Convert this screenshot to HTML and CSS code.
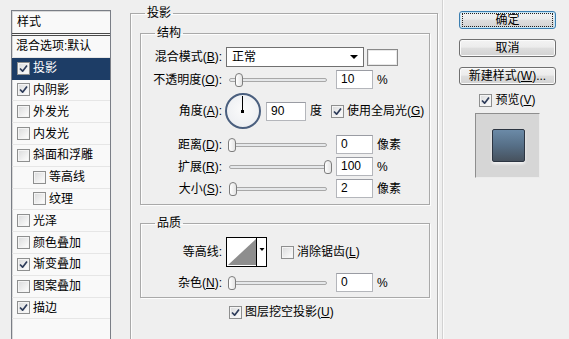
FILE: index.html
```html
<!DOCTYPE html>
<html lang="zh-CN">
<head>
<meta charset="utf-8">
<title>图层样式</title>
<link rel="stylesheet" href="styles.css">
</head>
<body>
<div class="dialog">
  <aside class="side">
    <div class="list">
      <div class="list-head">样式</div>
      <div class="item plain">混合选项:默认</div>
      <div class="item sel"><span class="cb on"><svg viewBox="0 0 11 11"><path d="M2 5.5 4.6 8.2 9 2.4"/></svg></span>投影</div>
      <div class="item"><span class="cb on"><svg viewBox="0 0 11 11"><path d="M2 5.5 4.6 8.2 9 2.4"/></svg></span>内阴影</div>
      <div class="item"><span class="cb"></span>外发光</div>
      <div class="item"><span class="cb"></span>内发光</div>
      <div class="item"><span class="cb"></span>斜面和浮雕</div>
      <div class="item sub"><span class="cb"></span>等高线</div>
      <div class="item sub"><span class="cb"></span>纹理</div>
      <div class="item"><span class="cb"></span>光泽</div>
      <div class="item"><span class="cb"></span>颜色叠加</div>
      <div class="item"><span class="cb on"><svg viewBox="0 0 11 11"><path d="M2 5.5 4.6 8.2 9 2.4"/></svg></span>渐变叠加</div>
      <div class="item"><span class="cb"></span>图案叠加</div>
      <div class="item"><span class="cb on"><svg viewBox="0 0 11 11"><path d="M2 5.5 4.6 8.2 9 2.4"/></svg></span>描边</div>
    </div>
  </aside>

  <main class="main">
    <fieldset class="group outer">
      <legend>投影</legend>

      <fieldset class="group inner">
        <legend>结构</legend>
        <div class="rows struct">
          <div class="row r-select">
            <span class="lbl">混合模式(<u>B</u>):</span>
            <div class="select"><span>正常</span><span class="arrow"></span></div>
            <span class="swatch"></span>
          </div>
          <div class="row r-field">
            <span class="lbl">不透明度(<u>O</u>):</span>
            <div class="slider"><span class="track"></span><span class="thumb" style="left:9px"></span></div>
            <span class="input">10</span>
            <span class="unit">%</span>
          </div>
          <div class="row r-dial">
            <span class="lbl">角度(<u>A</u>):</span>
            <div class="dial"><span class="hand"></span><span class="dot"></span></div>
            <span class="input angle">90</span>
            <span class="deg">度</span>
            <span class="cb on"><svg viewBox="0 0 11 11"><path d="M2 5.5 4.6 8.2 9 2.4"/></svg></span>
            <span class="cb-text">使用全局光(<u>G</u>)</span>
          </div>
          <div class="row r-field r-dist">
            <span class="lbl">距离(<u>D</u>):</span>
            <div class="slider"><span class="track"></span><span class="thumb" style="left:2px"></span></div>
            <span class="input">0</span>
            <span class="unit">像素</span>
          </div>
          <div class="row r-field">
            <span class="lbl">扩展(<u>R</u>):</span>
            <div class="slider"><span class="track"></span><span class="thumb" style="left:98px"></span></div>
            <span class="input">100</span>
            <span class="unit">%</span>
          </div>
          <div class="row r-field">
            <span class="lbl">大小(<u>S</u>):</span>
            <div class="slider"><span class="track"></span><span class="thumb" style="left:3px"></span></div>
            <span class="input">2</span>
            <span class="unit">像素</span>
          </div>
        </div>
      </fieldset>

      <fieldset class="group inner quality">
        <legend>品质</legend>
        <div class="rows">
          <div class="row r-contour">
            <span class="lbl">等高线:</span>
            <div class="contour">
              <svg viewBox="0 0 41 30" width="41" height="30">
                <rect x="0.5" y="0.5" width="40" height="29" fill="#fff" stroke="#000"/>
                <polygon points="2,28 30,2 30,28" fill="#8e8e8e"/>
                <line x1="30.5" y1="0.5" x2="30.5" y2="29.5" stroke="#000"/>
                <polygon points="33.5,11 38.5,11 36,14" fill="#000"/>
              </svg>
            </div>
            <span class="cb aa"></span>
            <span class="cb-text">消除锯齿(<u>L</u>)</span>
          </div>
          <div class="row r-field r-noise">
            <span class="lbl">杂色(<u>N</u>):</span>
            <div class="slider"><span class="track"></span><span class="thumb" style="left:2px"></span></div>
            <span class="input">0</span>
            <span class="unit">%</span>
          </div>
        </div>
      </fieldset>

      <div class="knockout">
        <span class="cb on"><svg viewBox="0 0 11 11"><path d="M2 5.5 4.6 8.2 9 2.4"/></svg></span>
        <span class="cb-text">图层挖空投影(<u>U</u>)</span>
      </div>
    </fieldset>
  </main>

  <div class="sep"></div>

  <div class="actions">
    <button class="btn default"><span>确定</span></button>
    <button class="btn">取消</button>
    <button class="btn">新建样式(<u>W</u>)...</button>
    <div class="preview-row">
      <span class="cb on"><svg viewBox="0 0 11 11"><path d="M2 5.5 4.6 8.2 9 2.4"/></svg></span>
      <span class="cb-text">预览(<u>V</u>)</span>
    </div>
    <div class="preview"><span class="swatch-prev"></span></div>
  </div>
</div>
</body>
</html>
```

FILE: styles.css
```css
* { box-sizing: border-box; }

html, body {
  margin: 0;
  padding: 0;
  width: 569px;
  height: 339px;
  overflow: hidden;
  background: #efefef;
}

body {
  font-family: "Liberation Sans", "Noto Sans CJK SC", sans-serif;
  font-size: 12px;
  line-height: 16px;
  color: #000;
}

u {
  text-decoration: underline;
  text-underline-offset: 1px;
}

.dialog {
  display: flex;
  align-items: flex-start;
  width: 569px;
  height: 339px;
  overflow: hidden;
}

/* ---------- left style list ---------- */
.side {
  width: 111px;
  flex: none;
  padding: 10px 0 0 11px;
}

.list {
  width: 100px;
  height: 329px;
  background: #f9f9f9;
  border: 1px solid #7a7e86;
  border-bottom: none;
  box-shadow: inset 1px 1px 0 #d8d8d8;
  overflow: hidden;
}

.list-head {
  height: 25px;
  padding: 3px 0 0 5px;
  border-bottom: 3px double #4a4a4a;
}

.item {
  height: 21.8px;
  display: flex;
  align-items: center;
  padding-left: 5px;
  gap: 3px;
  border-bottom: 1px solid #e6e6e6;
}

.item.plain { padding-left: 4px; }
.item.sub { padding-left: 21px; }

.item.sel {
  background: #1d3d66;
  color: #fff;
  border-bottom-color: #1d3d66;
}

/* ---------- checkbox ---------- */
.cb {
  flex: none;
  display: inline-flex;
  align-items: center;
  justify-content: center;
  width: 13px;
  height: 13px;
  border: 1px solid #8e8f8f;
  background: linear-gradient(135deg, #d9dadb 0%, #f4f4f4 70%, #ffffff 100%);
  box-shadow: inset 0 0 0 1px #f4f4f4;
}

.cb svg {
  width: 11px;
  height: 11px;
}

.cb svg path {
  fill: none;
  stroke: #2e3c5a;
  stroke-width: 1.7;
  stroke-linejoin: round;
}

.cb-text { white-space: nowrap; }

/* ---------- main groups ---------- */
.main {
  width: 308px;
  flex: none;
  margin-left: 19px;
  padding-top: 5px;
}

.group {
  margin: 0;
  padding: 0;
  min-width: 0;
  border: 1px solid #a9a9a9;
  box-shadow: inset 1px 1px 0 #fdfdfd, 1px 1px 0 #fdfdfd;
}

.group > legend {
  margin-left: 14px;
  padding: 0 2px;
  line-height: 16px;
}

.outer {
  width: 308px;
  height: 334px;
  border-bottom: none;
}

.inner {
  margin: 4px 7px 0 9px;
}

.quality {
  margin-top: 10px;
}

.rows {
  display: flex;
  flex-direction: column;
  padding-bottom: 6px;
}

.quality .rows { padding-bottom: 5px; }

.row {
  display: flex;
  align-items: center;
}

.lbl {
  flex: none;
  width: 81px;
  text-align: right;
  margin-right: 4px;
  white-space: nowrap;
}

.r-select { height: 20px; margin-top: 6px; }
.r-field { height: 19px; margin-top: 3px; }
.r-dial { height: 36px; margin-top: 4px; }
.r-dist { margin-top: 6px; }
.r-contour { height: 30px; margin-top: 6px; }
.r-noise { margin-top: 6px; }

/* select */
.select {
  width: 138px;
  height: 20px;
  border: 1px solid #707070;
  background: #fff;
  display: flex;
  align-items: center;
  justify-content: space-between;
  padding: 0 5px 0 5px;
}

.arrow {
  width: 0;
  height: 0;
  border-left: 4px solid transparent;
  border-right: 4px solid transparent;
  border-top: 4px solid #000;
}

.swatch {
  width: 31px;
  height: 17px;
  margin-left: 3px;
  border: 1px solid #8a8a8a;
  background: #fff;
  box-shadow: inset 0 0 0 1px #e8e8e8;
}

/* slider */
.slider {
  position: relative;
  width: 104px;
  height: 19px;
  flex: none;
}

.track {
  position: absolute;
  left: 3px;
  right: 3px;
  top: 8px;
  height: 4px;
  border: 1px solid #a8a8a8;
  border-radius: 2px;
  background: #e6e8ea;
}

.thumb {
  position: absolute;
  top: 3px;
  width: 8px;
  height: 14px;
  border: 1px solid #7d7d7d;
  border-radius: 4px 4px 3px 3px;
  background: linear-gradient(90deg, #ffffff, #e4e4e4);
}

/* text inputs */
.input {
  flex: none;
  width: 37px;
  height: 19px;
  margin-left: 6px;
  padding-left: 4px;
  border: 1px solid #b4b6bb;
  border-top-color: #9a9ca3;
  background: #fff;
  line-height: 17px;
}

.input.angle {
  width: 40px;
  margin-left: 5px;
}

.unit {
  margin-left: 4px;
  white-space: nowrap;
}

.deg {
  margin: 0 9px 0 4px;
}

.r-dial .cb { margin-right: 3px; }

/* angle dial */
.dial {
  position: relative;
  flex: none;
  width: 36px;
  height: 36px;
  margin-left: -1px;
  border-radius: 50%;
  border: 2px solid #4a5f7e;
  background: radial-gradient(circle at 50% 45%, #fbfbfb 0%, #eef0f3 70%, #dfe4ea 100%);
}

.hand {
  position: absolute;
  left: 15px;
  top: 1px;
  width: 1px;
  height: 15px;
  background: #000;
}

.dot {
  position: absolute;
  left: 14px;
  top: 15px;
  width: 3px;
  height: 3px;
  background: #000;
}

/* contour */
.contour {
  flex: none;
  width: 41px;
  height: 30px;
}

.contour svg { display: block; }

.cb.aa {
  margin-left: 14px;
  margin-right: 3px;
}

/* knockout checkbox */
.knockout {
  display: flex;
  align-items: center;
  gap: 3px;
  height: 16px;
  margin: 6px 0 0 98px;
}

/* ---------- separator & buttons ---------- */
.sep {
  flex: none;
  width: 2px;
  height: 339px;
  margin-left: 4px;
  border-left: 1px solid #d2d2d2;
  border-right: 1px solid #fbfbfb;
}

.actions {
  flex: none;
  width: 112px;
  padding: 11px 0 0 15px;
  display: flex;
  flex-direction: column;
  align-items: center;
}

.btn {
  width: 97px;
  height: 18px;
  padding: 0;
  margin: 0 0 10px 0;
  font: inherit;
  line-height: 16px;
  color: #000;
  border: 1px solid #707070;
  border-radius: 3px;
  background: linear-gradient(#f3f3f3 0%, #ececec 45%, #dedede 50%, #d2d2d2 100%);
  box-shadow: inset 0 0 0 1px #fbfbfb;
}

.btn.default {
  border-color: #3c7fb1;
  box-shadow: inset 0 0 0 1px #c4e5f6;
}

.btn.default span {
  display: block;
  margin: 2px 3px;
  line-height: 12px;
  outline: 1px dotted #222;
}

.preview-row {
  display: flex;
  align-items: center;
  gap: 3px;
  height: 16px;
  margin-top: -3px;
}

.preview {
  width: 65px;
  height: 65px;
  margin-top: 5px;
  background: #d6d6d6;
  border-top: 1px solid #8e8e8e;
  border-left: 1px solid #8e8e8e;
  border-right: 1px solid #ececec;
  border-bottom: 1px solid #ececec;
  display: flex;
  align-items: center;
  justify-content: center;
}

.swatch-prev {
  width: 33px;
  height: 33px;
  margin: -1px 0 0 1px;
  border: 1px solid #2c3542;
  border-radius: 2px;
  background: linear-gradient(#6b8aa7 0%, #566f87 50%, #47525e 100%);
  box-shadow: 0 2px 3px rgba(255,255,255,0.7);
}
```
